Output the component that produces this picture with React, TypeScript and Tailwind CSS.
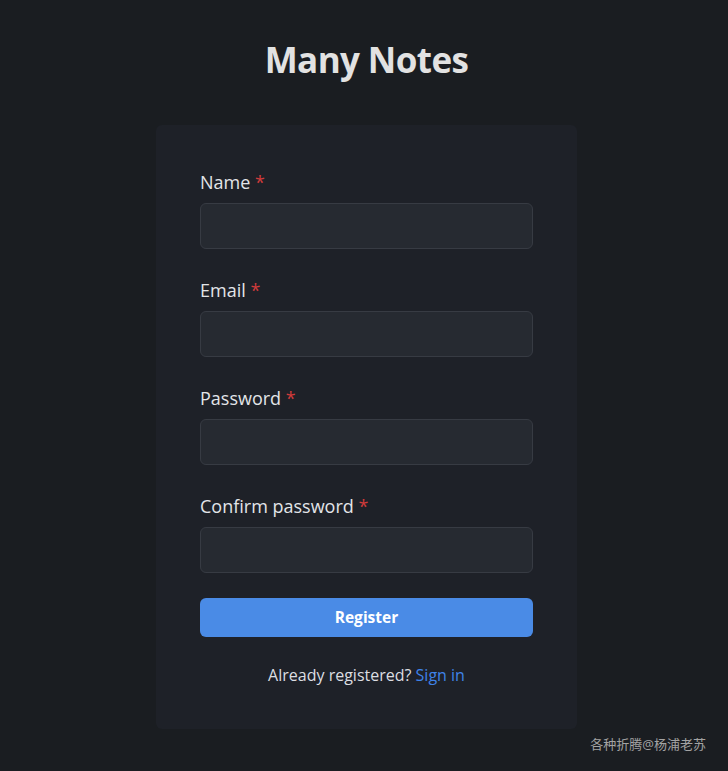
import React from 'react';

const fields = ['Name', 'Email', 'Password', 'Confirm password'];

export default function App() {
  return (
    <div
      className="min-h-screen bg-[#1a1d21] text-[#e3e5e8] relative"
      style={{ fontFamily: '"Open Sans", "Noto Sans", "Noto Sans CJK SC", sans-serif' }}
    >
      <div className="flex flex-col items-center pt-10 pl-[5px]">
        <h1 className="text-[35px] leading-[40px] font-bold text-[#e2e2e2] tracking-[-0.6px]">Many Notes</h1>

        <div className="mt-[45px] w-[421px] bg-[#1e2128] rounded-md px-[44px] pt-[44px] pb-[42px]">
          <form className="flex flex-col gap-[28px]" onSubmit={e => e.preventDefault()}>
            {fields.map(f => (
              <div key={f}>
                <label className="block text-[18px] leading-[26px] mb-2 text-[#e3e5e8]">
                  {f} <span className="text-[#d13b3b]">*</span>
                </label>
                <input
                  type={f.toLowerCase().includes('password') ? 'password' : 'text'}
                  className="w-full h-[46px] rounded-md bg-[#262a31] border border-[#373b43] px-3 text-[#e3e5e8] focus:outline-none"
                />
              </div>
            ))}
            <button
              type="submit"
              className="w-full h-[39px] -mt-[3px] rounded-md bg-[#4a8be6] text-white font-bold text-[15.5px]"
            >
              Register
            </button>
          </form>
          <p className="mt-[26px] text-center text-[16px] leading-[24px] text-[#dcdee2]">
            Already registered? <a href="#" className="text-[#3f83e8]">Sign in</a>
          </p>
        </div>
      </div>

      <div className="absolute right-[22px] top-[734px] text-[13px] leading-[20px] text-[#a3a3a3]">
        各种折腾@杨浦老苏
      </div>
    </div>
  );
}
